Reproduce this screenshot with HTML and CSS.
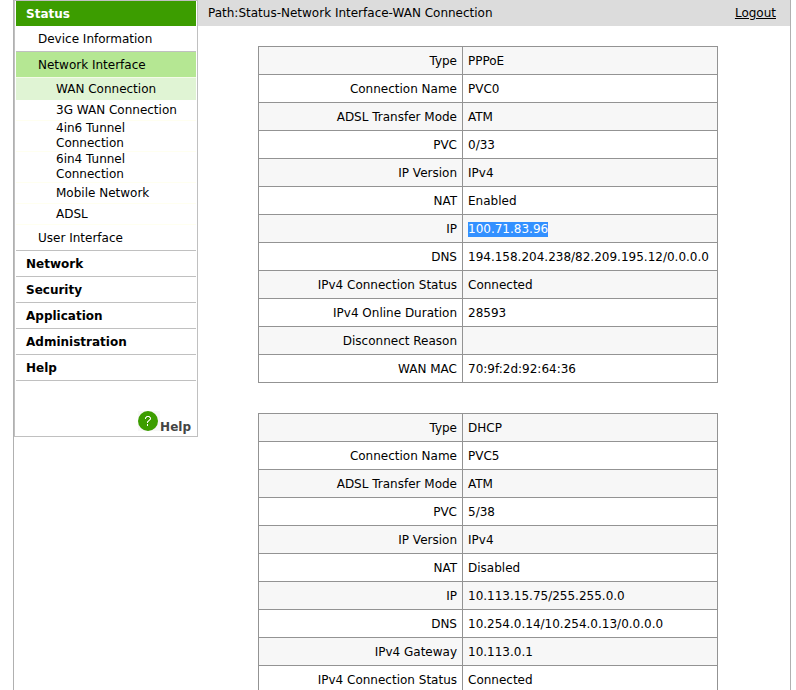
FILE: index.html
```
<!DOCTYPE html>
<html lang="en">
<head>
  <meta charset="UTF-8" />
  <meta name="viewport" content="width=device-width, initial-scale=1" />
  <title>Status - WAN Connection</title>
  <link rel="stylesheet" href="styles.css">
</head>
<body>
  <div class="page">
    <!-- Left menu -->
    <nav class="menu">
      <a class="top active" href="#status">Status</a>
      <a class="sub" href="#device">Device Information</a>
      <a class="sub active" href="#interface">Network Interface</a>
      <a class="item active" href="#wan">WAN Connection</a>
      <a class="item" href="#wan3g">3G WAN Connection</a>
      <a class="item" href="#4in6">4in6 Tunnel Connection</a>
      <a class="item" href="#6in4">6in4 Tunnel Connection</a>
      <a class="item" href="#mobile">Mobile Network</a>
      <a class="item" href="#adsl">ADSL</a>
      <a class="sub last" href="#user">User Interface</a>
      <a class="top" href="#network">Network</a>
      <a class="top" href="#security">Security</a>
      <a class="top" href="#application">Application</a>
      <a class="top" href="#administration">Administration</a>
      <a class="top" href="#help">Help</a>
      <a class="help" href="#help-page">
        <svg width="22" height="20" viewBox="0 0 22 20" aria-hidden="true">
          <rect width="22" height="20" fill="#f7f7f7" />
          <circle cx="10" cy="10" r="10" fill="#3c9d00" />
          <path d="M7.5 8V6.5H8.5V5.5H11.5V6.5H12.5V8.5H11.5V9.5H10.5V10.5H9.5V12M9.5 13V15" fill="none" stroke="#fff" />
        </svg>
        Help
      </a>
    </nav>
    <div class="main">
      <header class="bar">
        <span>Path:Status-Network Interface-WAN Connection</span>
        <a href="#logout">Logout</a>
      </header>
      <!-- Connection details -->
      <main class="content">
        <table>
          <tr><th scope="row">Type</th><td>PPPoE</td></tr>
          <tr><th scope="row">Connection Name</th><td>PVC0</td></tr>
          <tr><th scope="row">ADSL Transfer Mode</th><td>ATM</td></tr>
          <tr><th scope="row">PVC</th><td>0/33</td></tr>
          <tr><th scope="row">IP Version</th><td>IPv4</td></tr>
          <tr><th scope="row">NAT</th><td>Enabled</td></tr>
          <tr><th scope="row">IP</th><td><span class="selected">100.71.83.96</span></td></tr>
          <tr><th scope="row">DNS</th><td>194.158.204.238/82.209.195.12/0.0.0.0</td></tr>
          <tr><th scope="row">IPv4 Connection Status</th><td>Connected</td></tr>
          <tr><th scope="row">IPv4 Online Duration</th><td>28593</td></tr>
          <tr><th scope="row">Disconnect Reason</th><td></td></tr>
          <tr><th scope="row">WAN MAC</th><td>70:9f:2d:92:64:36</td></tr>
        </table>
        <table>
          <tr><th scope="row">Type</th><td>DHCP</td></tr>
          <tr><th scope="row">Connection Name</th><td>PVC5</td></tr>
          <tr><th scope="row">ADSL Transfer Mode</th><td>ATM</td></tr>
          <tr><th scope="row">PVC</th><td>5/38</td></tr>
          <tr><th scope="row">IP Version</th><td>IPv4</td></tr>
          <tr><th scope="row">NAT</th><td>Disabled</td></tr>
          <tr><th scope="row">IP</th><td>10.113.15.75/255.255.0.0</td></tr>
          <tr><th scope="row">DNS</th><td>10.254.0.14/10.254.0.13/0.0.0.0</td></tr>
          <tr><th scope="row">IPv4 Gateway</th><td>10.113.0.1</td></tr>
          <tr><th scope="row">IPv4 Connection Status</th><td>Connected</td></tr>
        </table>
      </main>
    </div>
  </div>
</body>
</html>
```
FILE: styles.css
```
* { box-sizing: border-box; }
body {
  margin: 0;
  font-family: "DejaVu Sans", Verdana, sans-serif;
  font-size: 12px;
  line-height: 15px;
  color: #000;
  background: #fff;
}
a { color: #000; }
.page {
  display: flex;
  align-items: flex-start;
  min-height: 100vh;
  margin: 0 5px 0 13px;
  border: 1px solid #b0b0b0;
  border-width: 0 1px;
}
/* Left menu */
.menu {
  flex: none;
  width: 184px;
  padding: 0 1px;
  border: 1px solid #c0c0c0;
}
.menu a { display: block; text-decoration: none; }
.menu .top {
  padding: 6px 10px 4px;
  border-bottom: 1px solid #c0c0c0;
  font-weight: bold;
}
.menu .top.active {
  background: #3c9d00;
  border-bottom: 0;
  color: #fff;
}
.menu .sub { padding: 6px 22px 4px; }
.menu .sub.active {
  background: #b5e793;
  border-top: 1px solid #c0c0c0;
  border-bottom: 1px solid #f4fbe8;
}
.menu .sub.last { border-bottom: 1px solid #c0c0c0; }
.menu .item {
  display: flex;
  align-items: center;
  min-height: 21px;
  padding: 0 40px;
  border-bottom: 1px solid #fffff0;
}
.menu .item:nth-child(-n+5) { padding-right: 0; }
.menu .item.active {
  min-height: 22px;
  padding-top: 2px;
  background: #e0f4d4;
  border-color: #e0f4d4;
}
.menu .help {
  display: flex;
  justify-content: flex-end;
  align-items: flex-end;
  height: 55px;
  padding: 0 5px 1px 0;
  color: #444;
  font-weight: bold;
}
.help svg { margin-bottom: 4px; }
/* Right side */
.main { flex: 1; min-width: 0; }
.bar {
  display: flex;
  justify-content: space-between;
  padding: 6px 14px 5px 10px;
  background: #dcdcdc;
}
.content { padding: 20px 72px 0 60px; }
table {
  width: 100%;
  margin-bottom: 30px;
  table-layout: fixed;
  border-collapse: collapse;
}
tr:nth-child(odd) { background: #f7f7f7; }
th, td {
  height: 28px;
  padding: 2px 5px 0;
  border: 1px solid #939393;
  overflow: hidden;
  white-space: nowrap;
}
th { width: 204px; text-align: right; font-weight: normal; }
.selected { display: inline-block; background: #3390ff; color: #fff; }
```
